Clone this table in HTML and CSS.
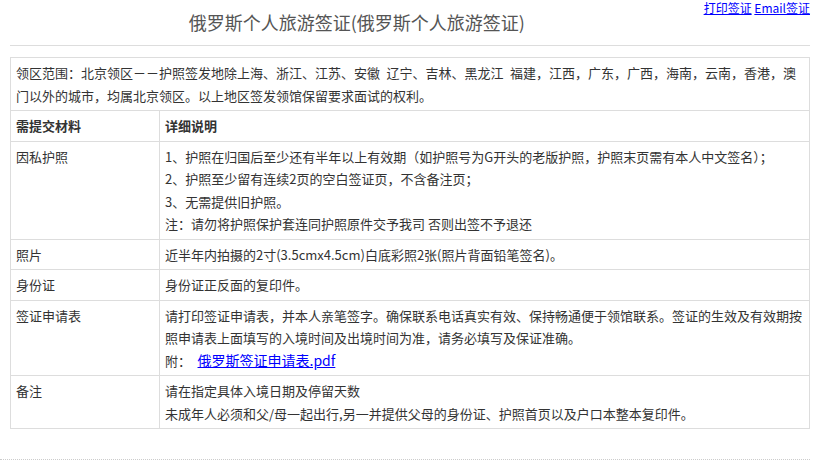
FILE: index.html
```html
<!DOCTYPE html>
<html lang="zh-CN">
<head>
<meta charset="utf-8">
<title>俄罗斯个人旅游签证</title>
<link rel="stylesheet" href="styles.css">
</head>
<body>
<div class="page">
  <div class="head">
    <h1 class="title">俄罗斯个人旅游签证(俄罗斯个人旅游签证)</h1>
    <div class="tools"><a href="#">打印签证</a> <a href="#">Email签证</a></div>
  </div>
  <table class="info">
    <colgroup><col class="c1"><col class="c2"></colgroup>
    <tr>
      <td colspan="2">领区范围：北京领区－－护照签发地除上海、浙江、江苏、安徽&ensp;辽宁、吉林、黑龙江&ensp;福建，江西，广东，广西，海南，云南，香港，澳门以外的城市，均属北京领区。以上地区签发领馆保留要求面试的权利。</td>
    </tr>
    <tr>
      <th>需提交材料</th>
      <th>详细说明</th>
    </tr>
    <tr>
      <td>因私护照</td>
      <td>1、护照在归国后至少还有半年以上有效期（如护照号为G开头的老版护照，护照末页需有本人中文签名）；<br>2、护照至少留有连续2页的空白签证页，不含备注页；<br>3、无需提供旧护照。<br>注：请勿将护照保护套连同护照原件交予我司 否则出签不予退还</td>
    </tr>
    <tr>
      <td>照片</td>
      <td>近半年内拍摄的2寸(3.5cmx4.5cm)白底彩照2张(照片背面铅笔签名)。</td>
    </tr>
    <tr>
      <td>身份证</td>
      <td>身份证正反面的复印件。</td>
    </tr>
    <tr>
      <td>签证申请表</td>
      <td>请打印签证申请表，并本人亲笔签字。确保联系电话真实有效、保持畅通便于领馆联系。签证的生效及有效期按照申请表上面填写的入境时间及出境时间为准，请务必填写及保证准确。<br>附：&ensp;<a class="file" href="#">俄罗斯签证申请表.pdf</a></td>
    </tr>
    <tr>
      <td>备注</td>
      <td>请在指定具体入境日期及停留天数<br>未成年人必须和父/母一起出行,另一并提供父母的身份证、护照首页以及户口本整本复印件。</td>
    </tr>
  </table>
</div>
<div class="foot"></div>
</body>
</html>
```

FILE: styles.css
```css
body {
  margin: 0;
  font-family: "Noto Sans CJK SC", "Liberation Sans", sans-serif;
  font-size: 13px;
  color: #333;
}

.page {
  width: 800px;
  padding-left: 10px;
}

.head {
  display: flex;
  align-items: flex-start;
  height: 45px;
  border-bottom: 1px solid #ddd;
}

.title {
  flex: 1;
  margin: 10px 0 0;
  text-align: center;
  font-size: 18px;
  line-height: 24px;
  font-weight: normal;
  color: #555;
}

.tools {
  font-size: 12px;
  line-height: 16px;
  white-space: nowrap;
}

.tools a,
.file {
  color: #00f;
  text-decoration: underline;
}

.file {
  font-size: 14px;
  line-height: 16px;
}

.info {
  margin-top: 11px;
  width: 800px;
  border-collapse: collapse;
  table-layout: fixed;
}

.c1 {
  width: 149px;
}

.info td,
.info th {
  border: 1px solid #ddd;
  padding: 4px 5px 3px;
  line-height: 22.5px;
  text-align: left;
  vertical-align: top;
  font-weight: normal;
}

.info th {
  font-weight: bold;
}

.foot {
  width: 810px;
  margin-top: 30px;
  border-top: 1px dotted #ccc;
}
```
